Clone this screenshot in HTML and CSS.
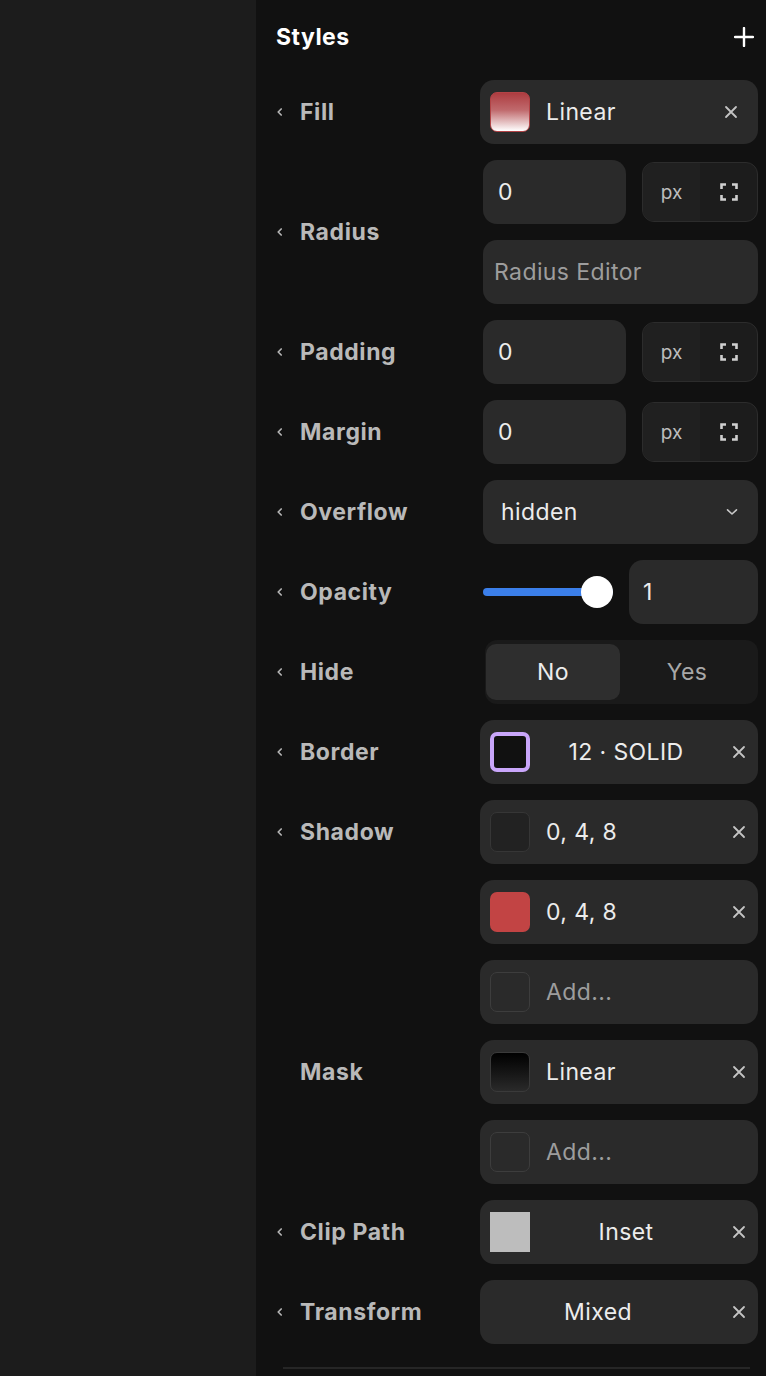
FILE: index.html
```html
<!DOCTYPE html>
<html lang="en">
<head>
<meta charset="UTF-8" />
<meta name="viewport" content="width=device-width, initial-scale=1" />
<title>Styles Panel</title>
<link rel="stylesheet" href="styles.css">
</head>
<body>
  <div class="app">
    <div class="canvas"></div>

    <aside class="panel">
      <div class="panel-head">
        <h2>Styles</h2>
        <button class="add-btn" aria-label="Add style">
          <svg width="20" height="20" viewBox="0 0 20 20"><path d="M10 1v18M1 10h18" stroke="#fff" stroke-width="2.4" stroke-linecap="round"/></svg>
        </button>
      </div>

      <div class="sections">
        <!-- Fill -->
        <div class="section">
          <div class="label"><span class="chev"></span>Fill</div>
          <div class="controls">
            <div class="field fill">
              <span class="swatch sw-fill"></span>
              <span class="val">Linear</span>
              <span class="close"></span>
            </div>
          </div>
        </div>

        <!-- Radius -->
        <div class="section">
          <div class="label mid"><span class="chev"></span>Radius</div>
          <div class="controls">
            <div class="input-row">
              <div class="num">0</div>
              <div class="unit"><span class="unit-px">px</span><span class="unit-icon"></span></div>
            </div>
            <div class="box placeholder">Radius Editor</div>
          </div>
        </div>

        <!-- Padding -->
        <div class="section">
          <div class="label"><span class="chev"></span>Padding</div>
          <div class="controls">
            <div class="input-row">
              <div class="num">0</div>
              <div class="unit"><span class="unit-px">px</span><span class="unit-icon"></span></div>
            </div>
          </div>
        </div>

        <!-- Margin -->
        <div class="section">
          <div class="label"><span class="chev"></span>Margin</div>
          <div class="controls">
            <div class="input-row">
              <div class="num">0</div>
              <div class="unit"><span class="unit-px">px</span><span class="unit-icon"></span></div>
            </div>
          </div>
        </div>

        <!-- Overflow -->
        <div class="section">
          <div class="label"><span class="chev"></span>Overflow</div>
          <div class="controls">
            <div class="box select">
              <span>hidden</span>
              <svg width="12" height="8" viewBox="0 0 12 8"><path d="M1.5 1.8L6 6l4.5-4.2" fill="none" stroke="#c8c8c8" stroke-width="1.6" stroke-linecap="round" stroke-linejoin="round"/></svg>
            </div>
          </div>
        </div>

        <!-- Opacity -->
        <div class="section">
          <div class="label"><span class="chev"></span>Opacity</div>
          <div class="controls">
            <div class="slider-row">
              <div class="slider">
                <div class="track"></div>
                <div class="thumb"></div>
              </div>
              <div class="num opacity-num">1</div>
            </div>
          </div>
        </div>

        <!-- Hide -->
        <div class="section">
          <div class="label"><span class="chev"></span>Hide</div>
          <div class="controls">
            <div class="seg">
              <button class="seg-btn active">No</button>
              <button class="seg-btn">Yes</button>
            </div>
          </div>
        </div>

        <!-- Border -->
        <div class="section">
          <div class="label"><span class="chev"></span>Border</div>
          <div class="controls">
            <div class="field">
              <span class="swatch sw-border"></span>
              <span class="val center">12 · SOLID</span>
              <span class="close"></span>
            </div>
          </div>
        </div>

        <!-- Shadow -->
        <div class="section">
          <div class="label"><span class="chev"></span>Shadow</div>
          <div class="controls">
            <div class="field">
              <span class="swatch sw-dark"></span>
              <span class="val">0, 4, 8</span>
              <span class="close"></span>
            </div>
            <div class="field">
              <span class="swatch sw-red"></span>
              <span class="val">0, 4, 8</span>
              <span class="close"></span>
            </div>
            <div class="field">
              <span class="swatch sw-empty"></span>
              <span class="val muted">Add...</span>
            </div>
          </div>
        </div>

        <!-- Mask -->
        <div class="section">
          <div class="label"><span class="chev none"></span>Mask</div>
          <div class="controls">
            <div class="field">
              <span class="swatch sw-mask"></span>
              <span class="val">Linear</span>
              <span class="close"></span>
            </div>
            <div class="field">
              <span class="swatch sw-empty"></span>
              <span class="val muted">Add...</span>
            </div>
          </div>
        </div>

        <!-- Clip Path -->
        <div class="section">
          <div class="label"><span class="chev"></span>Clip Path</div>
          <div class="controls">
            <div class="field">
              <span class="swatch sw-clip"></span>
              <span class="val center">Inset</span>
              <span class="close"></span>
            </div>
          </div>
        </div>

        <!-- Transform -->
        <div class="section">
          <div class="label"><span class="chev"></span>Transform</div>
          <div class="controls">
            <div class="field no-swatch">
              <span class="val center">Mixed</span>
              <span class="close"></span>
            </div>
          </div>
        </div>
      </div>

      <div class="divider"></div>
    </aside>
  </div>
</body>
</html>
```

FILE: styles.css
```css
:root {
  --bg-left: #1c1c1c;
  --panel: #111111;
  --field: #2a2a2a;
  --label: #b9b9b9;
  --text: #ececec;
  --muted: #9d9d9d;
}

* {
  box-sizing: border-box;
}

html, body {
  margin: 0;
  height: 1376px;
  overflow: hidden;
}

body {
  background: var(--bg-left);
  font-family: Inter, "Open Sans", sans-serif;
  color: var(--text);
}

.app {
  display: flex;
  height: 100%;
}

.canvas {
  width: 256px;
  flex: none;
  background: var(--bg-left);
}

.panel {
  flex: 1;
  background: var(--panel);
  padding: 0 8px 0 20px;
}

.panel-head {
  height: 74px;
  margin-bottom: 6px;
  display: flex;
  align-items: center;
  justify-content: space-between;
}

.panel-head h2 {
  margin: 0;
  font-size: 23px;
  letter-spacing: 0.5px;
  font-weight: 700;
  color: #fff;
}

.add-btn {
  background: none;
  border: none;
  padding: 0;
  margin-right: 4px;
  display: flex;
}

.sections {
  display: flex;
  flex-direction: column;
  gap: 16px;
}

.section {
  display: flex;
}

.label {
  width: 204px;
  flex: none;
  height: 64px;
  display: flex;
  align-items: center;
  font-size: 23px;
  letter-spacing: 0.6px;
  font-weight: 700;
  color: var(--label);
}

.label.mid {
  align-self: center;
}

.chev {
  width: 24px;
  height: 10px;
  flex: none;
  background: url("data:image/svg+xml;utf8,<svg xmlns='http://www.w3.org/2000/svg' width='8' height='10' viewBox='0 0 8 10'><path d='M5.2 2L2.2 5l3 3' fill='none' stroke='%23b4b4b4' stroke-width='1.7' stroke-linecap='round' stroke-linejoin='round'/></svg>") no-repeat 0 0;
}

.chev.none {
  background: none;
}

.controls {
  flex: 1;
  display: flex;
  flex-direction: column;
  gap: 16px;
}

/* swatch + text + close */
.field {
  height: 64px;
  background: var(--field);
  border-radius: 14px;
  display: flex;
  align-items: center;
  padding: 0 12px 0 10px;
  gap: 16px;
  font-size: 23px;
  letter-spacing: 0.4px;
}

.field.fill {
  padding-right: 20px;
}

.field.no-swatch {
  padding-left: 0;
}

.val {
  flex: 1;
  color: var(--text);
  white-space: nowrap;
}

.val.center {
  text-align: center;
}

.swatch + .val.center {
  margin-right: 10px;
}

.val.muted {
  color: var(--muted);
}

.close {
  width: 14px;
  height: 14px;
  flex: none;
  background: url("data:image/svg+xml;utf8,<svg xmlns='http://www.w3.org/2000/svg' width='14' height='14' viewBox='0 0 14 14'><path d='M2 2l10 10M12 2L2 12' stroke='%23c4c4c4' stroke-width='1.8' stroke-linecap='round'/></svg>") no-repeat center;
}

.swatch {
  width: 40px;
  height: 40px;
  flex: none;
  border-radius: 7px;
}

.sw-fill {
  background: linear-gradient(#ad3c40, #c06a6d 45%, #fff);
  border: 1px solid #b34346;
}

.sw-border {
  background: #111;
  border: 4px solid #c9a6fa;
}

.sw-dark {
  background: #222;
  border: 1px solid #363636;
}

.sw-red {
  background: #c24444;
}

.sw-empty {
  border: 1.5px solid #3d3d3d;
}

.sw-mask {
  background: linear-gradient(#000, #2a2a2a);
  border: 1px solid #3a3a3a;
}

.sw-clip {
  background: #bdbdbd;
  border-radius: 0;
}

/* number + unit */
.input-row {
  margin-left: 3px;
  display: flex;
  align-items: center;
  gap: 16px;
}

.num {
  height: 64px;
  width: 143px;
  background: var(--field);
  border-radius: 14px;
  display: flex;
  align-items: center;
  padding-left: 15px;
  font-size: 23px;
  color: var(--text);
}

.unit {
  flex: 1;
  height: 60px;
  border: 1px solid #2c2c2c;
  border-radius: 12px;
  display: flex;
  overflow: hidden;
  background: #1c1c1c;
}

.unit-px {
  width: 57px;
  display: flex;
  align-items: center;
  justify-content: center;
  font-size: 19px;
  color: #bdbdbd;
  background: #202020;
}

.unit-icon {
  flex: 1;
  background: url("data:image/svg+xml;utf8,<svg xmlns='http://www.w3.org/2000/svg' width='18' height='18' viewBox='0 0 18 18'><path d='M1.5 6V1.5H6M12 1.5h4.5V6M16.5 12v4.5H12M6 16.5H1.5V12' fill='none' stroke='%23d0d0d0' stroke-width='2.6'/></svg>") no-repeat center;
}

.box {
  margin-left: 3px;
  height: 64px;
  background: var(--field);
  border-radius: 14px;
  display: flex;
  align-items: center;
  font-size: 23px;
  letter-spacing: 0.4px;
}

.placeholder {
  padding-left: 11px;
  color: var(--muted);
}

.select {
  padding: 0 20px 0 18px;
  justify-content: space-between;
  color: var(--text);
}

/* opacity */
.slider-row {
  margin-left: 3px;
  display: flex;
  align-items: center;
  gap: 16px;
}

.slider {
  width: 130px;
  height: 64px;
  position: relative;
  display: flex;
  align-items: center;
}

.track {
  width: 100%;
  height: 8px;
  border-radius: 4px;
  background: #3b7fea;
}

.thumb {
  position: absolute;
  right: 0;
  top: 16px;
  width: 32px;
  height: 32px;
  border-radius: 50%;
  background: #fff;
}

.opacity-num {
  flex: 1;
  width: auto;
  padding-left: 14px;
}

/* hide toggle */
.seg {
  margin-left: 5px;
  height: 64px;
  background: #1a1a1a;
  border-radius: 12px;
  display: flex;
  padding: 4px 4px 4px 1px;
}

.seg-btn {
  flex: 1;
  border: none;
  background: none;
  border-radius: 10px;
  font-family: inherit;
  font-size: 23px;
  letter-spacing: 0.4px;
  color: #a8a8a8;
}

.seg-btn.active {
  background: #2e2e2e;
  color: var(--text);
}

.divider {
  margin: 23px 8px 0 7px;
  height: 2px;
  background: #262626;
}
```
